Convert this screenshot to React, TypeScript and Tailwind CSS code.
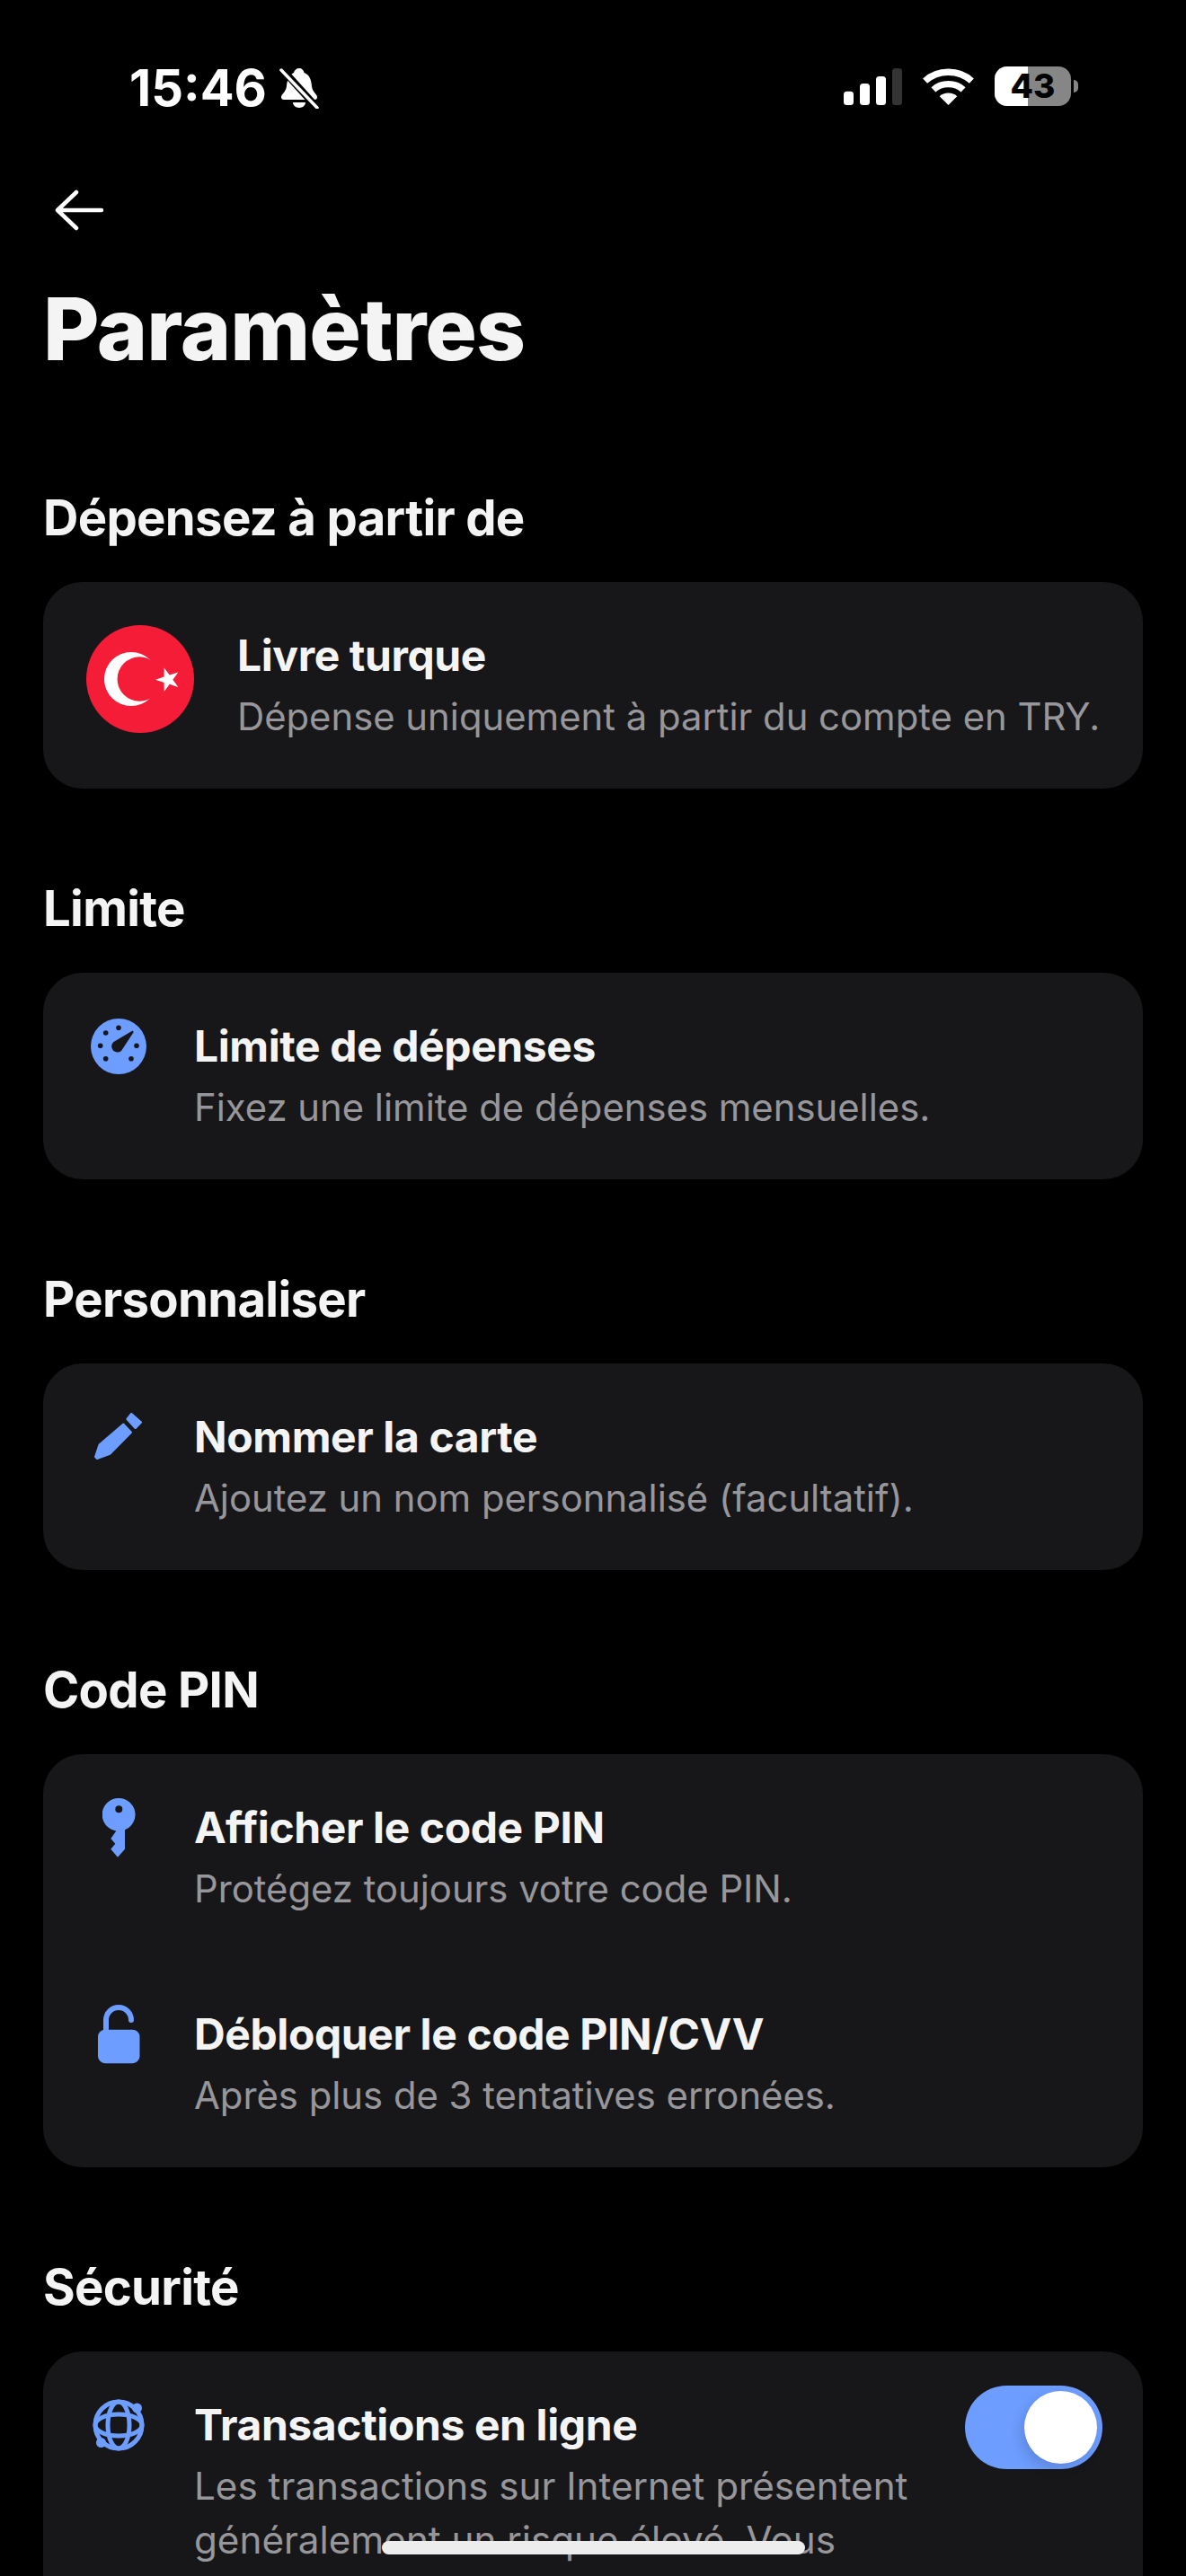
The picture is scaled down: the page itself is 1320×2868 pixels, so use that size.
import React from "react";

const BLUE = "#6c9dff";
const CARD = "#171719";

function Gauge() {
  return (
    <svg width="62" height="62" viewBox="-31 -31 62 62">
      <circle cx="0" cy="0" r="31" fill={BLUE} />
      <path d="M-5.500 -5 L15.500 -17.500 L16.800 -16 L3 5 A5.800 5.800 0 0 1 -5.500 -5 Z" fill={CARD} />
      <circle cx="0" cy="-20.700" r="2.800" fill={CARD} />
      <circle cx="-14.300" cy="-15" r="2.800" fill={CARD} />
      <circle cx="-20.300" cy="-0.700" r="2.800" fill={CARD} />
      <circle cx="-14.300" cy="13.700" r="2.800" fill={CARD} />
      <circle cx="14" cy="13.700" r="2.800" fill={CARD} />
      <circle cx="20" cy="-0.700" r="2.800" fill={CARD} />
    </svg>
  );
}

function Pencil() {
  return (
    <svg width="54" height="54" viewBox="0 0 54 54">
      <path d="M32.300 12.500 41 21.700 17.300 45.700 3 51 1 49 5.500 35.500Z" fill={BLUE} stroke={BLUE} strokeWidth="2" strokeLinejoin="round" />
      <path d="M41.300 1.500 51.500 10.500 45.700 16.500 37 7Z" fill={BLUE} stroke={BLUE} strokeWidth="3" strokeLinejoin="round" />
    </svg>
  );
}

function Key() {
  return (
    <svg width="37" height="66" viewBox="0 0 37 66">
      <path fillRule="evenodd" fill={BLUE} d="M18.300 0a18.300 18.300 0 0 1 6.700 35.300V56.700L17 65.700 9.300 56.700 14.300 50.700 9.300 45 15.300 36.400A18.300 18.300 0 0 1 18.300 0ZM18.300 8.300a4 4 0 1 0 0 8 4 4 0 0 0 0-8Z" />
    </svg>
  );
}

function Unlock() {
  return (
    <svg width="47" height="66" viewBox="0 0 47 66">
      <path d="M9 30V17a14 14 0 0 1 28 0" fill="none" stroke={BLUE} strokeWidth="6" strokeLinecap="round" />
      <rect x="0" y="27.700" width="46.500" height="37.500" rx="8" fill={BLUE} />
    </svg>
  );
}

function Globe() {
  return (
    <svg width="60" height="60" viewBox="-30 -30 60 60" fill="none" stroke={BLUE} strokeWidth="5">
      <circle cx="0" cy="0" r="26" />
      <ellipse cx="0" cy="0" rx="12" ry="26" />
      <ellipse cx="0" cy="0" rx="26" ry="12" />
      <circle cx="20.500" cy="-19" r="5.500" fill={BLUE} stroke="none" />
      <circle cx="-19.500" cy="19.500" r="5.500" fill={BLUE} stroke="none" />
    </svg>
  );
}

function Flag() {
  return (
    <svg width="120" height="120" viewBox="0 0 120 120">
      <circle cx="60" cy="60" r="60" fill="#f51c37" />
      <circle cx="50" cy="60" r="30" fill="#fff" />
      <circle cx="59.300" cy="60" r="24.700" fill="#f51c37" />
      <polygon points="77,60.700 86.600,57.500 86.700,47.400 92.700,55.600 102.300,52.500 96.400,60.700 102.300,68.900 92.700,65.800 86.700,74 86.600,63.900" fill="#fff" />
    </svg>
  );
}

function IconBox({ children }: { children: React.ReactNode }) {
  return <div className="mr-[49px] flex h-[68px] w-[70px] shrink-0 items-center justify-center">{children}</div>;
}

function RowText({ title, sub }: { title: string; sub: string }) {
  return (
    <div>
      <div className="text-[48px] leading-[68px] font-bold tracking-[-0.4px] text-[#f4f4f5]">{title}</div>
      <div className="text-[41.800px] leading-[68px] text-[#97979b]">{sub}</div>
    </div>
  );
}

function Row({ icon, title, sub }: { icon: React.ReactNode; title: string; sub: string }) {
  return (
    <div className="flex h-[230px] items-start pt-[48px] pl-[49px]">
      <IconBox>{icon}</IconBox>
      <RowText title={title} sub={sub} />
    </div>
  );
}

function Heading({ children }: { children: React.ReactNode }) {
  return <h2 className="mb-[38px] text-[54.500px] leading-[68px] font-bold tracking-[-0.7px] text-[#f4f4f5]">{children}</h2>;
}

function Section({ title, children }: { title: string; children: React.ReactNode }) {
  return (
    <section className="mx-[48px] mb-[99px]">
      <Heading>{title}</Heading>
      <div className="rounded-[44px] bg-[#171719]">{children}</div>
    </section>
  );
}

export default function App() {
  return (
    <div className="relative h-[2868px] w-[1320px] overflow-hidden bg-black font-['Inter',sans-serif] antialiased">
      <div className="flex h-[210px] items-start justify-between pt-[70px] pl-[144px] pr-[120px]">
        <div className="flex items-center gap-[14px]">
          <span className="text-[56px] leading-[56px] font-bold text-white">15:46</span>
          <svg width="44" height="46" viewBox="0 0 44 46">
            <path d="M22 1c3 0 5 2 5.500 5 6 2 8 8 8.500 15 .500 6 6 9 6 12 0 2-1 3-3 3H5c-2 0-3-1-3-3 0-3 5.500-6 6-12 .500-7 3-13 8-15C16.500 3 19 1 22 1Z" fill="#fff" />
            <path d="M15 39h14c0 3-3 6-7 6s-7-3-7-6Z" fill="#fff" />
            <path d="M3 2 41 44" stroke="#000" strokeWidth="8" />
            <path d="M2 3 42 45" stroke="#fff" strokeWidth="3.500" strokeLinecap="round" />
          </svg>
        </div>
        <div className="flex items-center gap-[23px] pt-[4px]">
          <svg width="65" height="41" viewBox="0 0 65 41">
            <rect x="0" y="25.700" width="11" height="15.300" rx="3.500" fill="#fff" />
            <rect x="18" y="17" width="11" height="24" rx="3.500" fill="#fff" />
            <rect x="36" y="9" width="11" height="32" rx="3.500" fill="#fff" />
            <rect x="54" y="0" width="11" height="41" rx="3.500" fill="#333" />
          </svg>
          <svg width="57" height="41" viewBox="0 0 58 42" fill="none" stroke="#fff" strokeWidth="7.500">
            <path d="M2.500 14.500C17 1 41 1 55.500 14.500" />
            <path d="M12 24.500C21 16 37 16 46 24.500" />
            <path d="M29 42 19 32c5-5 15-5 20 0Z" fill="#fff" stroke="none" />
          </svg>
          <div className="relative flex items-center">
            <div className="relative h-[44px] w-[85px] overflow-hidden rounded-[14px] bg-[#868686]">
              <div className="h-full w-[37px] bg-white" />
              <span className="absolute inset-0 flex items-center justify-center text-[37px] leading-[44px] font-extrabold text-black">43</span>
            </div>
            <div className="ml-[3px] h-[14px] w-[5px] rounded-r-full bg-[#868686]" />
          </div>
        </div>
      </div>

      <div className="pl-[60px]">
        <svg className="block" width="56" height="48" viewBox="0 0 56 48" fill="none" stroke="#fff" strokeWidth="4.500" strokeLinecap="round" strokeLinejoin="round">
          <path d="M25 4 4 24l21 20M4 24h49" />
        </svg>
      </div>

      <h1 className="mt-[52px] mb-[120px] pl-[48px] text-[96px] leading-[112px] font-extrabold tracking-[-1px] text-[#f4f4f5]">Paramètres</h1>

      <Section title="Dépensez à partir de">
        <div className="flex h-[230px] items-start pt-[48px] pl-[48px]">
          <div className="mr-[48px] shrink-0"><Flag /></div>
          <RowText title="Livre turque" sub="Dépense uniquement à partir du compte en TRY." />
        </div>
      </Section>
      <Section title="Limite">
        <Row icon={<Gauge />} title="Limite de dépenses" sub="Fixez une limite de dépenses mensuelles." />
      </Section>
      <Section title="Personnaliser">
        <Row icon={<Pencil />} title="Nommer la carte" sub="Ajoutez un nom personnalisé (facultatif)." />
      </Section>
      <Section title="Code PIN">
        <Row icon={<Key />} title="Afficher le code PIN" sub="Protégez toujours votre code PIN." />
        <Row icon={<Unlock />} title="Débloquer le code PIN/CVV" sub="Après plus de 3 tentatives erronées." />
      </Section>
      <section className="mx-[48px]">
        <Heading>Sécurité</Heading>
        <div className="flex h-[400px] items-start rounded-[44px] bg-[#171719] pt-[48px] pl-[49px] pr-[45px]">
          <IconBox><Globe /></IconBox>
          <div className="w-[830px] shrink-0">
            <div className="text-[48px] leading-[68px] font-bold tracking-[-0.4px] text-[#f4f4f5]">Transactions en ligne</div>
            <div className="mt-[4px] text-[42.200px] leading-[60px] text-[#97979b]">Les transactions sur Internet présentent généralement un risque élevé. Vous</div>
          </div>
          <div className="-mt-[10px] ml-auto flex h-[93px] w-[153px] shrink-0 items-center justify-end rounded-full bg-[#6c9dff] pr-[6px]">
            <div className="h-[81px] w-[81px] rounded-full bg-white shadow-[-4px_6px_14px_rgba(0,0,0,0.14)]" />
          </div>
        </div>
      </section>

      <div className="absolute top-[2829px] left-[425px] h-[15px] w-[471px] rounded-full bg-[#ededed]" />
    </div>
  );
}
